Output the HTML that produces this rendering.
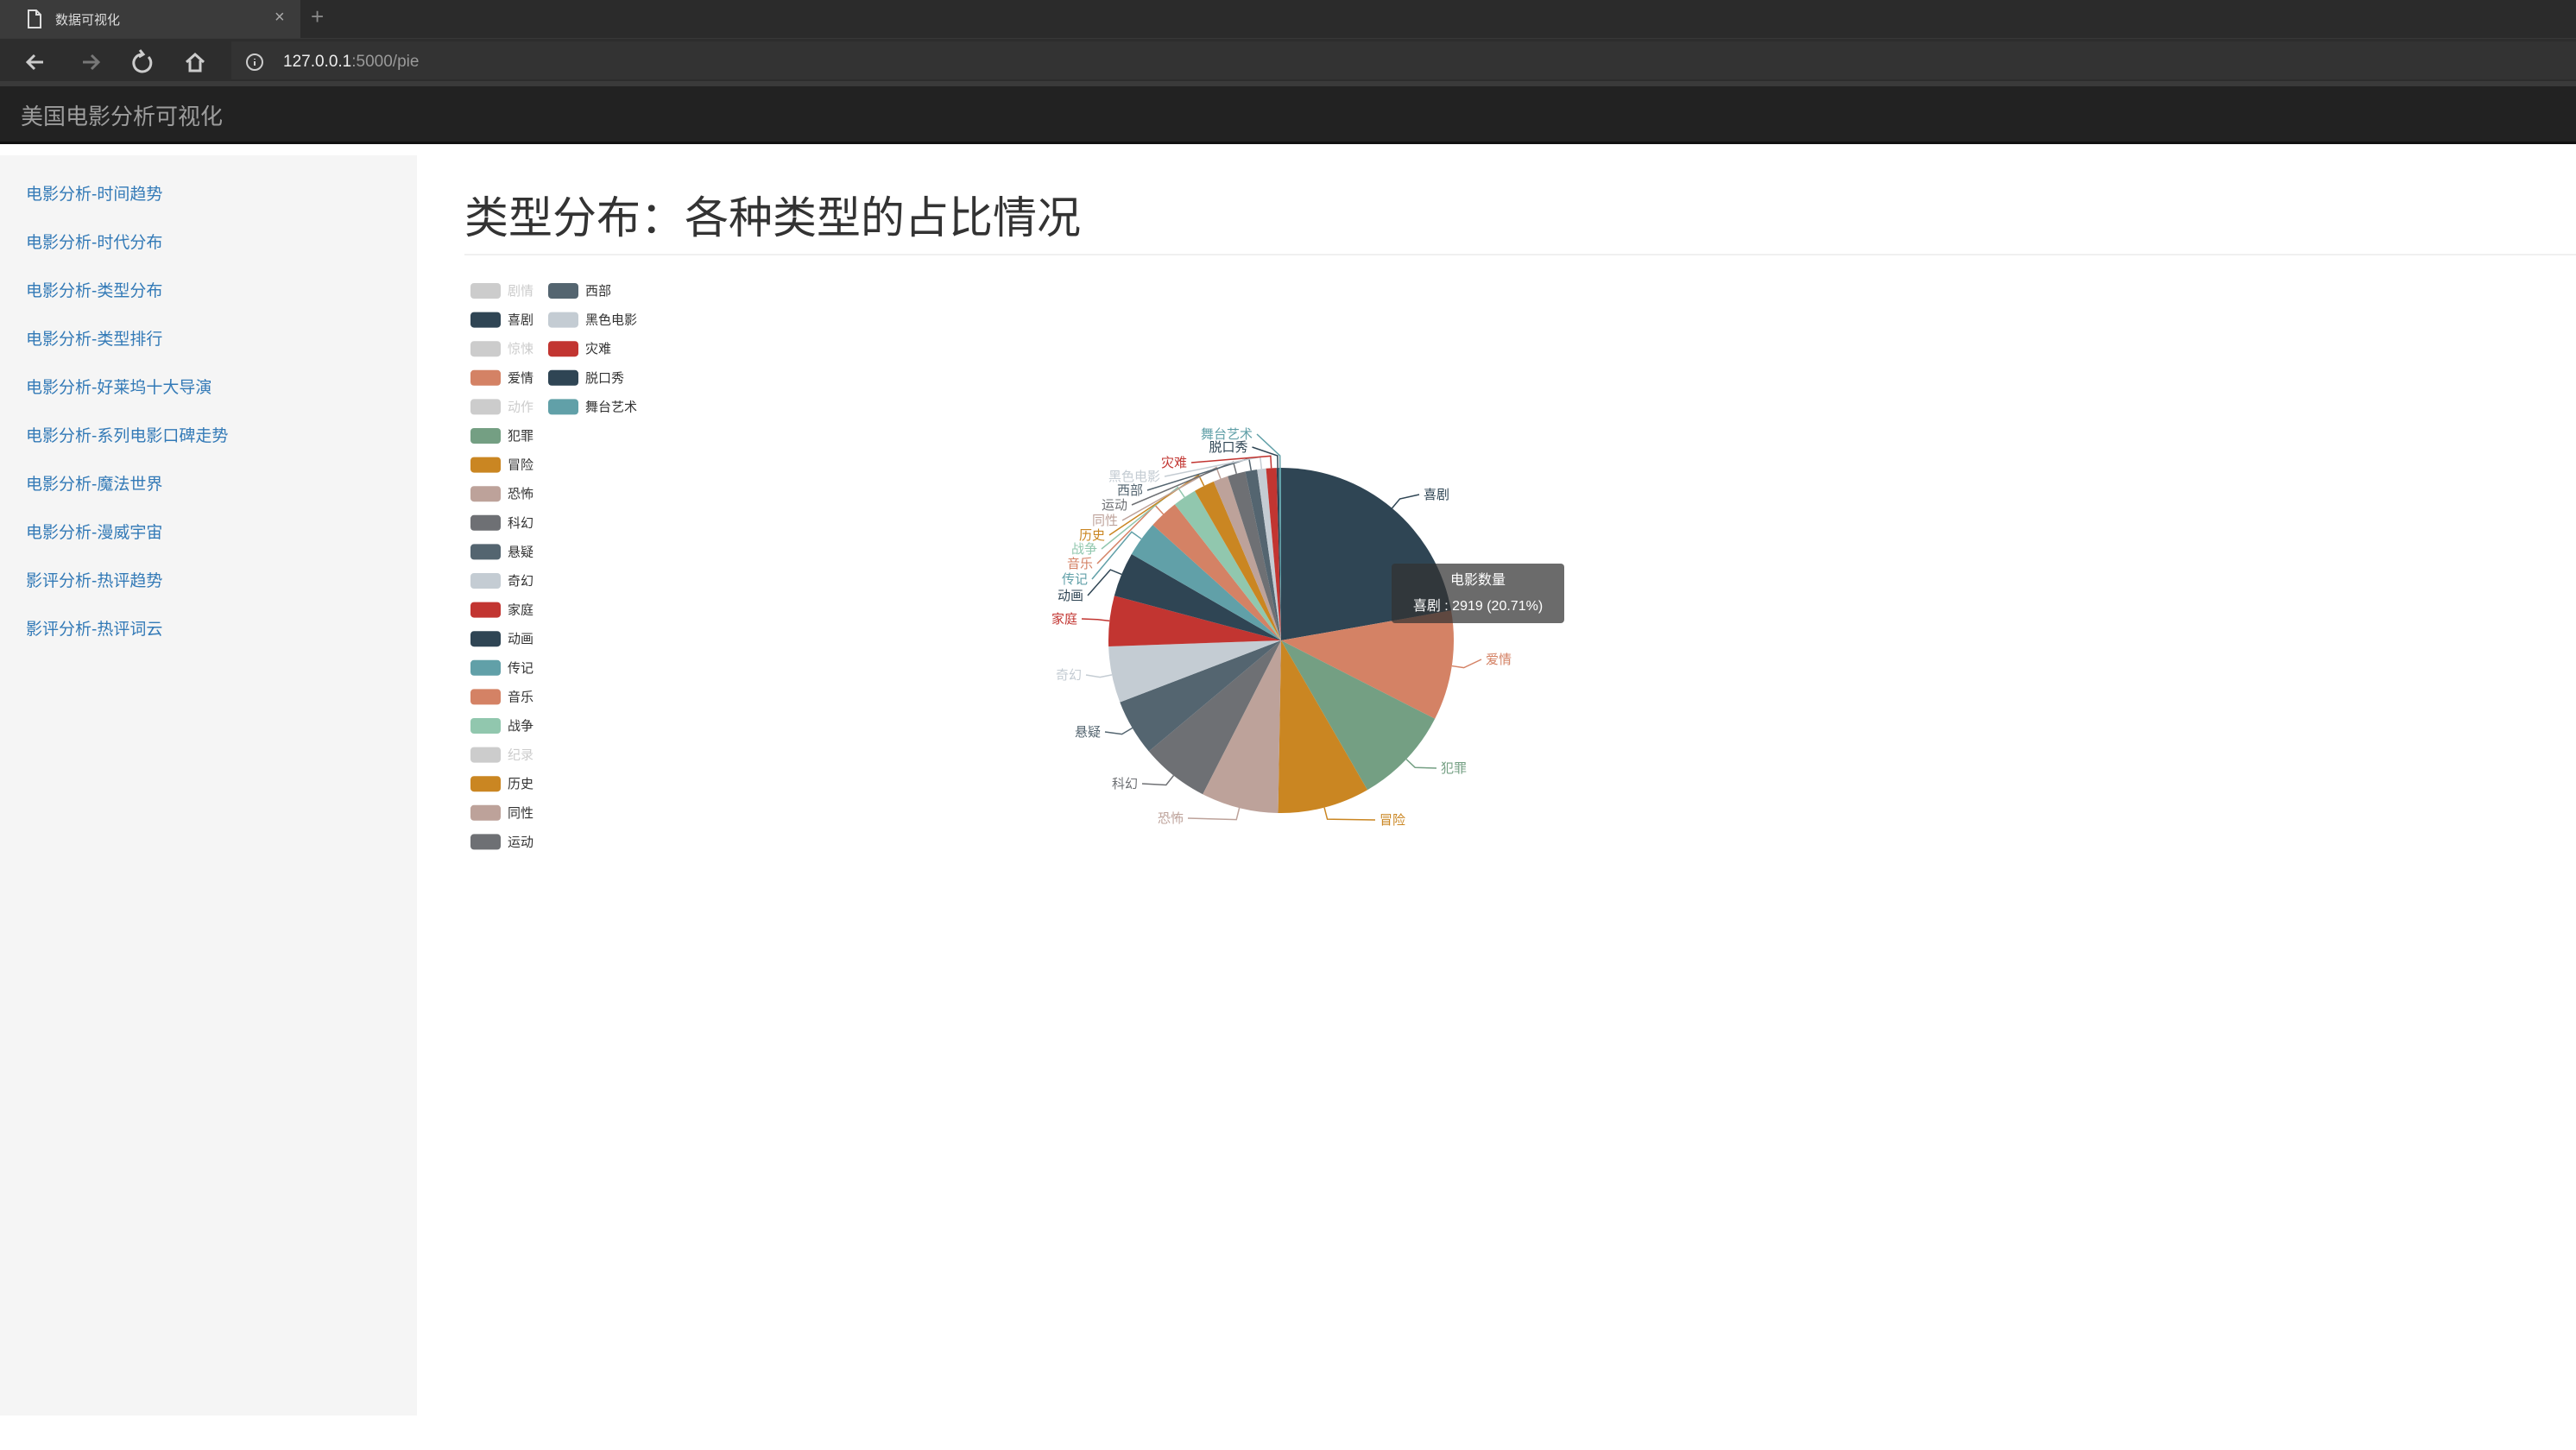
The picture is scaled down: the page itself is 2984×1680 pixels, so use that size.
<!DOCTYPE html>
<html><head><meta charset="utf-8">
<style>
*{margin:0;padding:0;box-sizing:border-box}
body{width:2984px;height:1680px;overflow:hidden;background:#fff;font-family:"Liberation Sans","Noto Sans CJK SC",sans-serif;position:relative}
.abs{position:absolute}
#tabbar{left:0;top:0;width:2984px;height:44px;background:#2b2b2b}
#tab{left:0;top:0;width:348px;height:44px;background:#3b3b3b}
#addr{left:0;top:44px;width:2984px;height:50px;background:#2d2d2d;border-top:1px solid #383838}
#urlbox{left:268px;top:48px;width:2716px;height:44px;background:#333}
#line{left:0;top:94px;width:2984px;height:6px;background:#3a3a3a}
#hdr{left:0;top:100px;width:2984px;height:67px;background:#222;border-bottom:3px solid #111}
#side{left:0;top:180px;width:483px;height:1460px;background:#f5f5f5}
.lk{position:absolute;left:30px;font-size:19px;color:#337ab7;line-height:20px}
</style></head><body>
<div class="abs" id="tabbar"></div>
<div class="abs" id="tab"></div>
<svg class="abs" style="left:30px;top:10px" width="20" height="24" viewBox="0 0 20 24"><path d="M3 2h9l5 5v15H3z M12 2v5h5" fill="none" stroke="#ddd" stroke-width="2"/></svg>
<div class="abs" style="left:64px;top:12px;font-size:15px;color:#ddd">数据可视化</div>
<div class="abs" style="left:318px;top:9px;font-size:20px;color:#aaa">×</div>
<div class="abs" style="left:360px;top:4px;font-size:26px;color:#888">+</div>
<div class="abs" id="addr"></div>
<div class="abs" id="urlbox"></div>
<svg class="abs" style="left:0;top:44px" width="330" height="50">
<path d="M50 28H32 M40 20l-8 8 8 8" fill="none" stroke="#ccc" stroke-width="3"/>
<path d="M96 28h18 M106 20l8 8-8 8" fill="none" stroke="#777" stroke-width="3"/>
<path d="M172 22a10 10 0 1 1-8-3" fill="none" stroke="#ccc" stroke-width="3"/><path d="M162 14l4 5-5 3" fill="none" stroke="#ccc" stroke-width="3"/>
<path d="M216 28l10-9 10 9 M220 26v12h12V26" fill="none" stroke="#ccc" stroke-width="3"/>
<circle cx="295" cy="28" r="9" fill="none" stroke="#ccc" stroke-width="2"/><path d="M295 24v1 M295 27v5" stroke="#ccc" stroke-width="2"/>
</svg>
<div class="abs" style="left:328px;top:61px;font-size:19px;color:#eee">127.0.0.1<span style="color:#999">:5000/pie</span></div>
<div class="abs" id="line"></div>
<div class="abs" id="hdr"></div>
<div class="abs" style="left:24px;top:115px;font-size:26px;color:#9d9d9d">美国电影分析可视化</div>
<div class="abs" id="side">
<div class="lk" style="top:36px">电影分析-时间趋势</div>
<div class="lk" style="top:92px">电影分析-时代分布</div>
<div class="lk" style="top:148px">电影分析-类型分布</div>
<div class="lk" style="top:204px">电影分析-类型排行</div>
<div class="lk" style="top:260px">电影分析-好莱坞十大导演</div>
<div class="lk" style="top:316px">电影分析-系列电影口碑走势</div>
<div class="lk" style="top:372px">电影分析-魔法世界</div>
<div class="lk" style="top:428px">电影分析-漫威宇宙</div>
<div class="lk" style="top:484px">影评分析-热评趋势</div>
<div class="lk" style="top:540px">影评分析-热评词云</div>
</div>
<div class="abs" style="left:538px;top:224px;font-size:51px;color:#333;line-height:58px">类型分布：各种类型的占比情况</div>
<div class="abs" style="left:538px;top:294px;width:2446px;height:2px;background:#f0f0f0"></div>
<svg class="abs" id="chart" style="left:0;top:0" width="2984" height="1680">
<g font-size="15" font-family="Liberation Sans,Noto Sans CJK SC,sans-serif">
<g id="legend"></g><g id="pie"></g><g id="labels"></g>
</g>
</svg>
<div class="abs" style="left:1612px;top:653px;width:200px;height:69px;background:rgba(50,50,50,0.72);border-radius:4px;color:#fff;font-size:16px;text-align:center;line-height:30px;padding-top:5px">电影数量<br>喜剧 : 2919 (20.71%)</div>
<script>
var NS="http://www.w3.org/2000/svg";
function el(t,a,txt){var e=document.createElementNS(NS,t);for(var k in a)e.setAttribute(k,a[k]);if(txt)e.textContent=txt;return e;}
var leg=document.getElementById('legend');
var col1=[["剧情","#ccc",1],["喜剧","#2f4554"],["惊悚","#ccc",1],["爱情","#d48265"],["动作","#ccc",1],["犯罪","#749f83"],["冒险","#ca8622"],["恐怖","#bda29a"],["科幻","#6e7074"],["悬疑","#546570"],["奇幻","#c4ccd3"],["家庭","#c23531"],["动画","#2f4554"],["传记","#61a0a8"],["音乐","#d48265"],["战争","#91c7ae"],["纪录","#ccc",1],["历史","#ca8622"],["同性","#bda29a"],["运动","#6e7074"]];
var col2=[["西部","#546570"],["黑色电影","#c4ccd3"],["灾难","#c23531"],["脱口秀","#2f4554"],["舞台艺术","#61a0a8"]];
function addLeg(list,x){list.forEach(function(it,i){var y=337+i*33.6;leg.appendChild(el('rect',{x:x,y:y-9,width:35,height:18,rx:4,fill:it[1]}));leg.appendChild(el('text',{x:x+43,y:y+5,fill:it[2]?'#ccc':'#333'},it[0]));});}
addLeg(col1,545);addLeg(col2,635);
var cx=1484,cy=742,R=200;
var b=[0,80,117,150,181,207,230,249,268,285,300,312,322,330,337,342,348,352,355,358.5,359.3,360];
var cols=["#2f4554","#d48265","#749f83","#ca8622","#bda29a","#6e7074","#546570","#c4ccd3","#c23531","#2f4554","#61a0a8","#d48265","#91c7ae","#ca8622","#bda29a","#6e7074","#546570","#c4ccd3","#c23531","#2f4554","#61a0a8"];
var names=["喜剧","爱情","犯罪","冒险","恐怖","科幻","悬疑","奇幻","家庭","动画","传记","音乐","战争","历史","同性","运动","西部","黑色电影","灾难","脱口秀","舞台艺术"];
var lp=[[1664,573],[1736,764],[1684,890],[1613,950],[1356,948],[1303,908],[1260,848],[1238,782],[1233,717],[1240,690],[1245,671],[1251,653],[1256,636],[1265,620],[1280,603],[1291,585],[1309,568],[1314,552],[1360,536],[1423,518],[1421,503]];
function pt(a,r){a=a*Math.PI/180;return [cx+r*Math.sin(a),cy-r*Math.cos(a)];}
var pie=document.getElementById('pie'),lab=document.getElementById('labels');
for(var i=0;i<21;i++){
 var p1=pt(b[i],R),p2=pt(b[i+1],R),lg=(b[i+1]-b[i])>180?1:0;
 pie.appendChild(el('path',{d:'M'+cx+' '+cy+'L'+p1[0]+' '+p1[1]+'A'+R+' '+R+' 0 '+lg+' 1 '+p2[0]+' '+p2[1]+'Z',fill:cols[i]}));
 var m=(b[i]+b[i+1])/2,s=pt(m,R),t=pt(m,R+14);
 var L=lp[i],hw=names[i].length*7.5,right=L[0]>cx;
 var ex=right?L[0]-hw-5:L[0]+hw+5;
 var c=cols[i];
 lab.appendChild(el('polyline',{points:s[0]+','+s[1]+' '+t[0]+','+t[1]+' '+ex+','+L[1],fill:'none',stroke:c,'stroke-width':1.5}));
 lab.appendChild(el('text',{x:L[0],y:L[1]+5,'text-anchor':'middle',fill:c},names[i]));
}
</script>
</body></html>
